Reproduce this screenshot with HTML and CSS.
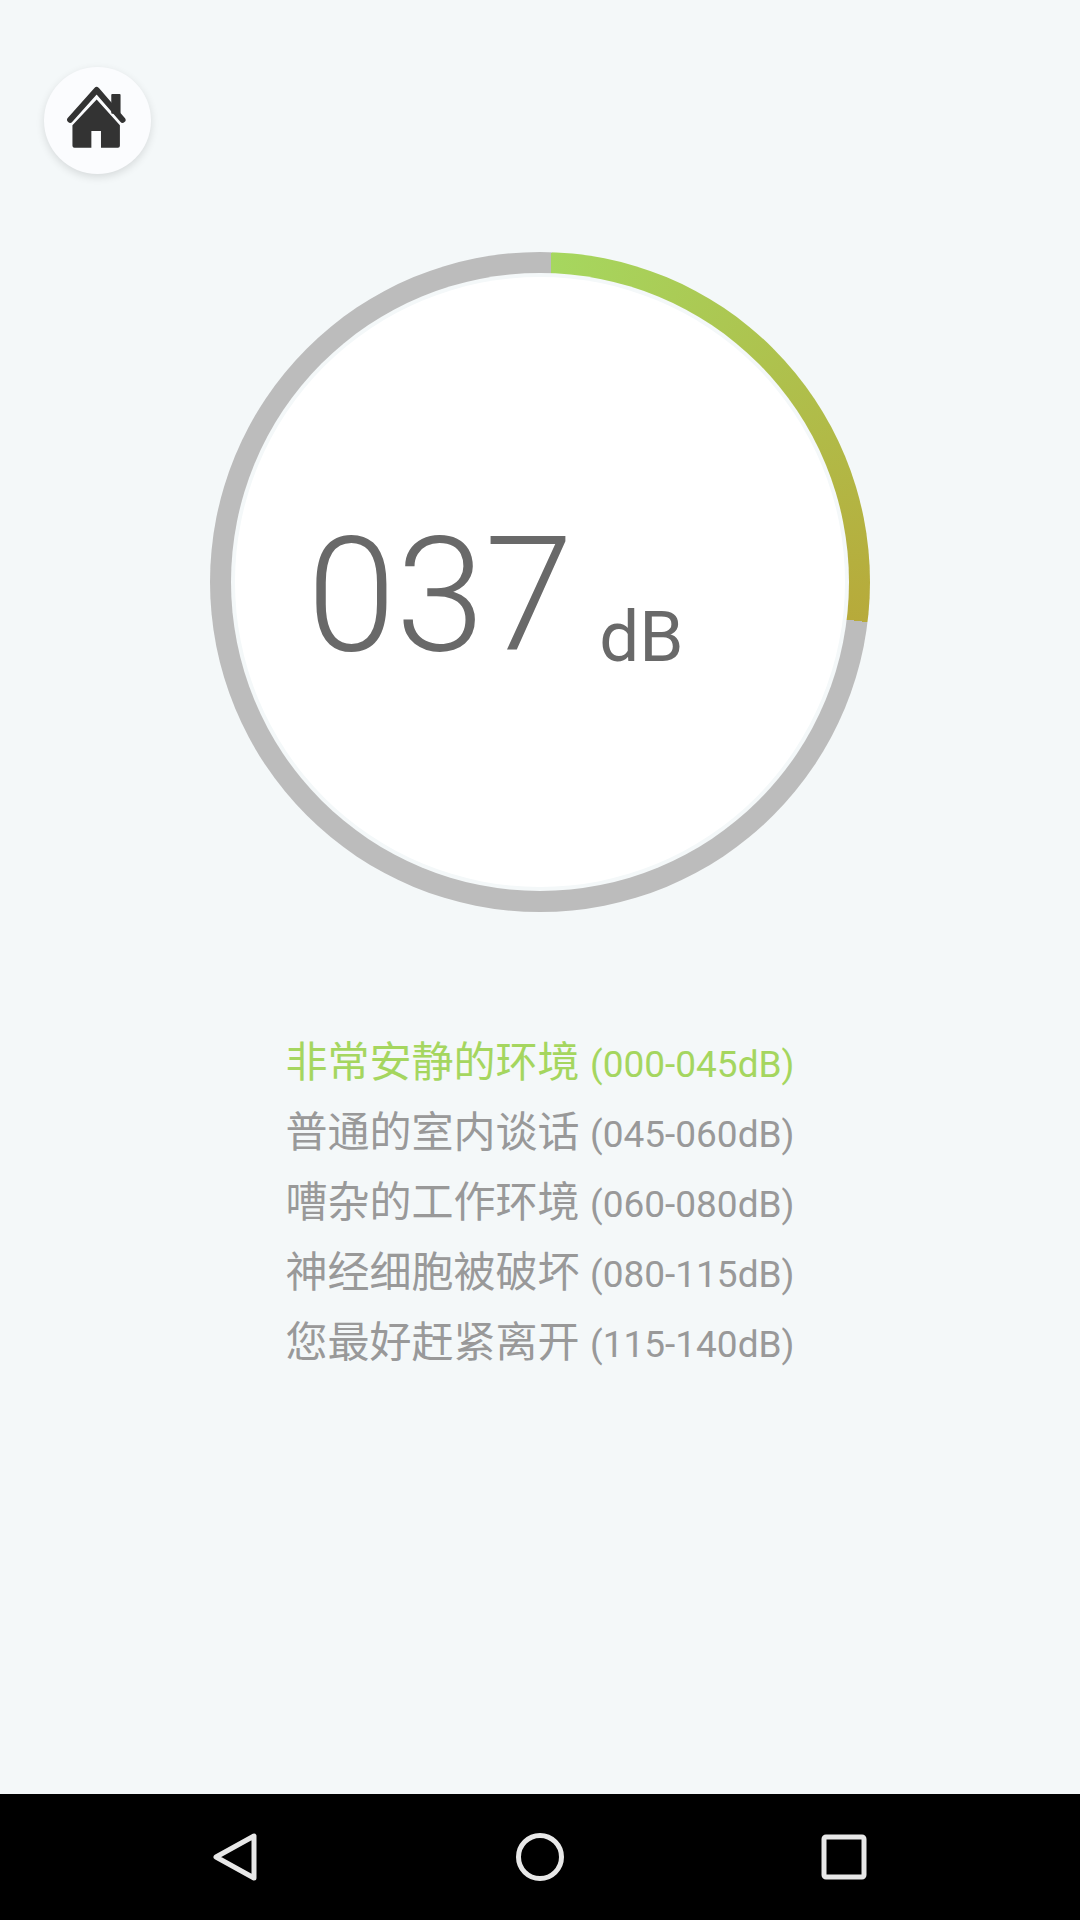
FILE: index.html
```html
<!DOCTYPE html>
<html lang="zh-CN">
<head>
    <meta charset="UTF-8">
    <meta name="viewport" content="width=device-width, initial-scale=1.0">
    <title>噪音检测</title>
    <link rel="stylesheet" href="styles.css">
</head>
<body>

<div class="page">
    <button class="home-btn" type="button" aria-label="Home">
        <svg class="home-icon" viewBox="132.5 130 200 220">
            <rect x="274" y="160" width="28" height="60" rx="3" fill="#333"/>
            <path d="M150 238 L230 148 L308 238" fill="none" stroke="#333" stroke-width="18" stroke-linecap="round" stroke-linejoin="round"/>
            <path d="M230 177 L300 254 V316 Q300 322 294 322 H243 V272 H214 V322 H163 Q157 322 157 316 V254 Z" fill="#333"/>
        </svg>
    </button>

    <div class="dial">
        <div class="dial-gap">
            <div class="dial-face">
                <span class="value">037</span>
                <span class="unit">dB</span>
            </div>
        </div>
    </div>

    <ul class="levels">
        <li class="level active"><span class="level-name">非常安静的环境</span> <span class="level-range">(000-045dB)</span></li>
        <li class="level"><span class="level-name">普通的室内谈话</span> <span class="level-range">(045-060dB)</span></li>
        <li class="level"><span class="level-name">嘈杂的工作环境</span> <span class="level-range">(060-080dB)</span></li>
        <li class="level"><span class="level-name">神经细胞被破坏</span> <span class="level-range">(080-115dB)</span></li>
        <li class="level"><span class="level-name">您最好赶紧离开</span> <span class="level-range">(115-140dB)</span></li>
    </ul>

    <div class="navbar">
        <svg class="nav-icon" viewBox="0 0 48 48">
            <path d="M42 3 V45 L4 24 Z" fill="none" stroke="#e8e8e8" stroke-width="5" stroke-linejoin="round"/>
        </svg>
        <svg class="nav-icon" viewBox="0 0 48 48">
            <circle cx="24" cy="24" r="21.5" fill="none" stroke="#e8e8e8" stroke-width="5"/>
        </svg>
        <svg class="nav-icon" viewBox="0 0 48 48">
            <rect x="4" y="4" width="40" height="40" rx="2" fill="none" stroke="#e8e8e8" stroke-width="5"/>
        </svg>
    </div>
</div>

</body>
</html>
```

FILE: styles.css
```css
* {
    box-sizing: border-box;
}
body {
    margin: 0;
    font-family: Roboto, "Noto Sans CJK SC", sans-serif;
    background-color: #f4f8f9;
}
.page {
    display: flex;
    flex-direction: column;
    width: 1080px;
    height: 1920px;
}
.home-btn {
    display: flex;
    align-items: center;
    justify-content: center;
    width: 107px;
    height: 107px;
    margin: 67px 0 0 44px;
    padding: 0;
    border: none;
    border-radius: 50%;
    background-color: #fbfcfe;
    box-shadow: 0 3px 8px rgba(0, 0, 0, 0.12);
}
.home-icon {
    width: 67px;
    height: 73px;
}
.dial {
    align-self: center;
    width: 660px;
    height: 660px;
    margin-top: 78px;
    padding: 21px;
    border-radius: 50%;
    background: conic-gradient(#bcbcbc 0deg, #bcbcbc 2deg, #a6d75f 2deg, #b7aa3a 97deg, #bcbcbc 97deg);
}
.dial-gap {
    height: 100%;
    padding: 4px;
    border-radius: 50%;
    background-color: #f4f8f9;
}
.dial-face {
    display: flex;
    align-items: flex-end;
    height: 100%;
    padding: 0 0 0 72px;
    border-radius: 50%;
    background-color: #fff;
    color: #696969;
}
.value {
    margin-bottom: 211px;
    font-size: 160px;
    font-weight: 300;
    line-height: 160px;
}
.unit {
    margin: 0 0 215px 26px;
    font-size: 71px;
    line-height: 71px;
}
.levels {
    align-self: center;
    margin: 116px 0 0;
    padding: 0;
    list-style: none;
    color: #999;
}
.level {
    height: 70px;
    font-size: 42px;
    line-height: 70px;
    white-space: nowrap;
}
.level.active {
    color: #a5d65f;
}
.level-range {
    font-size: 37px;
}
.navbar {
    display: flex;
    justify-content: center;
    align-items: center;
    gap: 256px;
    height: 126px;
    margin-top: auto;
    background-color: #000;
}
.nav-icon {
    width: 48px;
    height: 48px;
}
```
